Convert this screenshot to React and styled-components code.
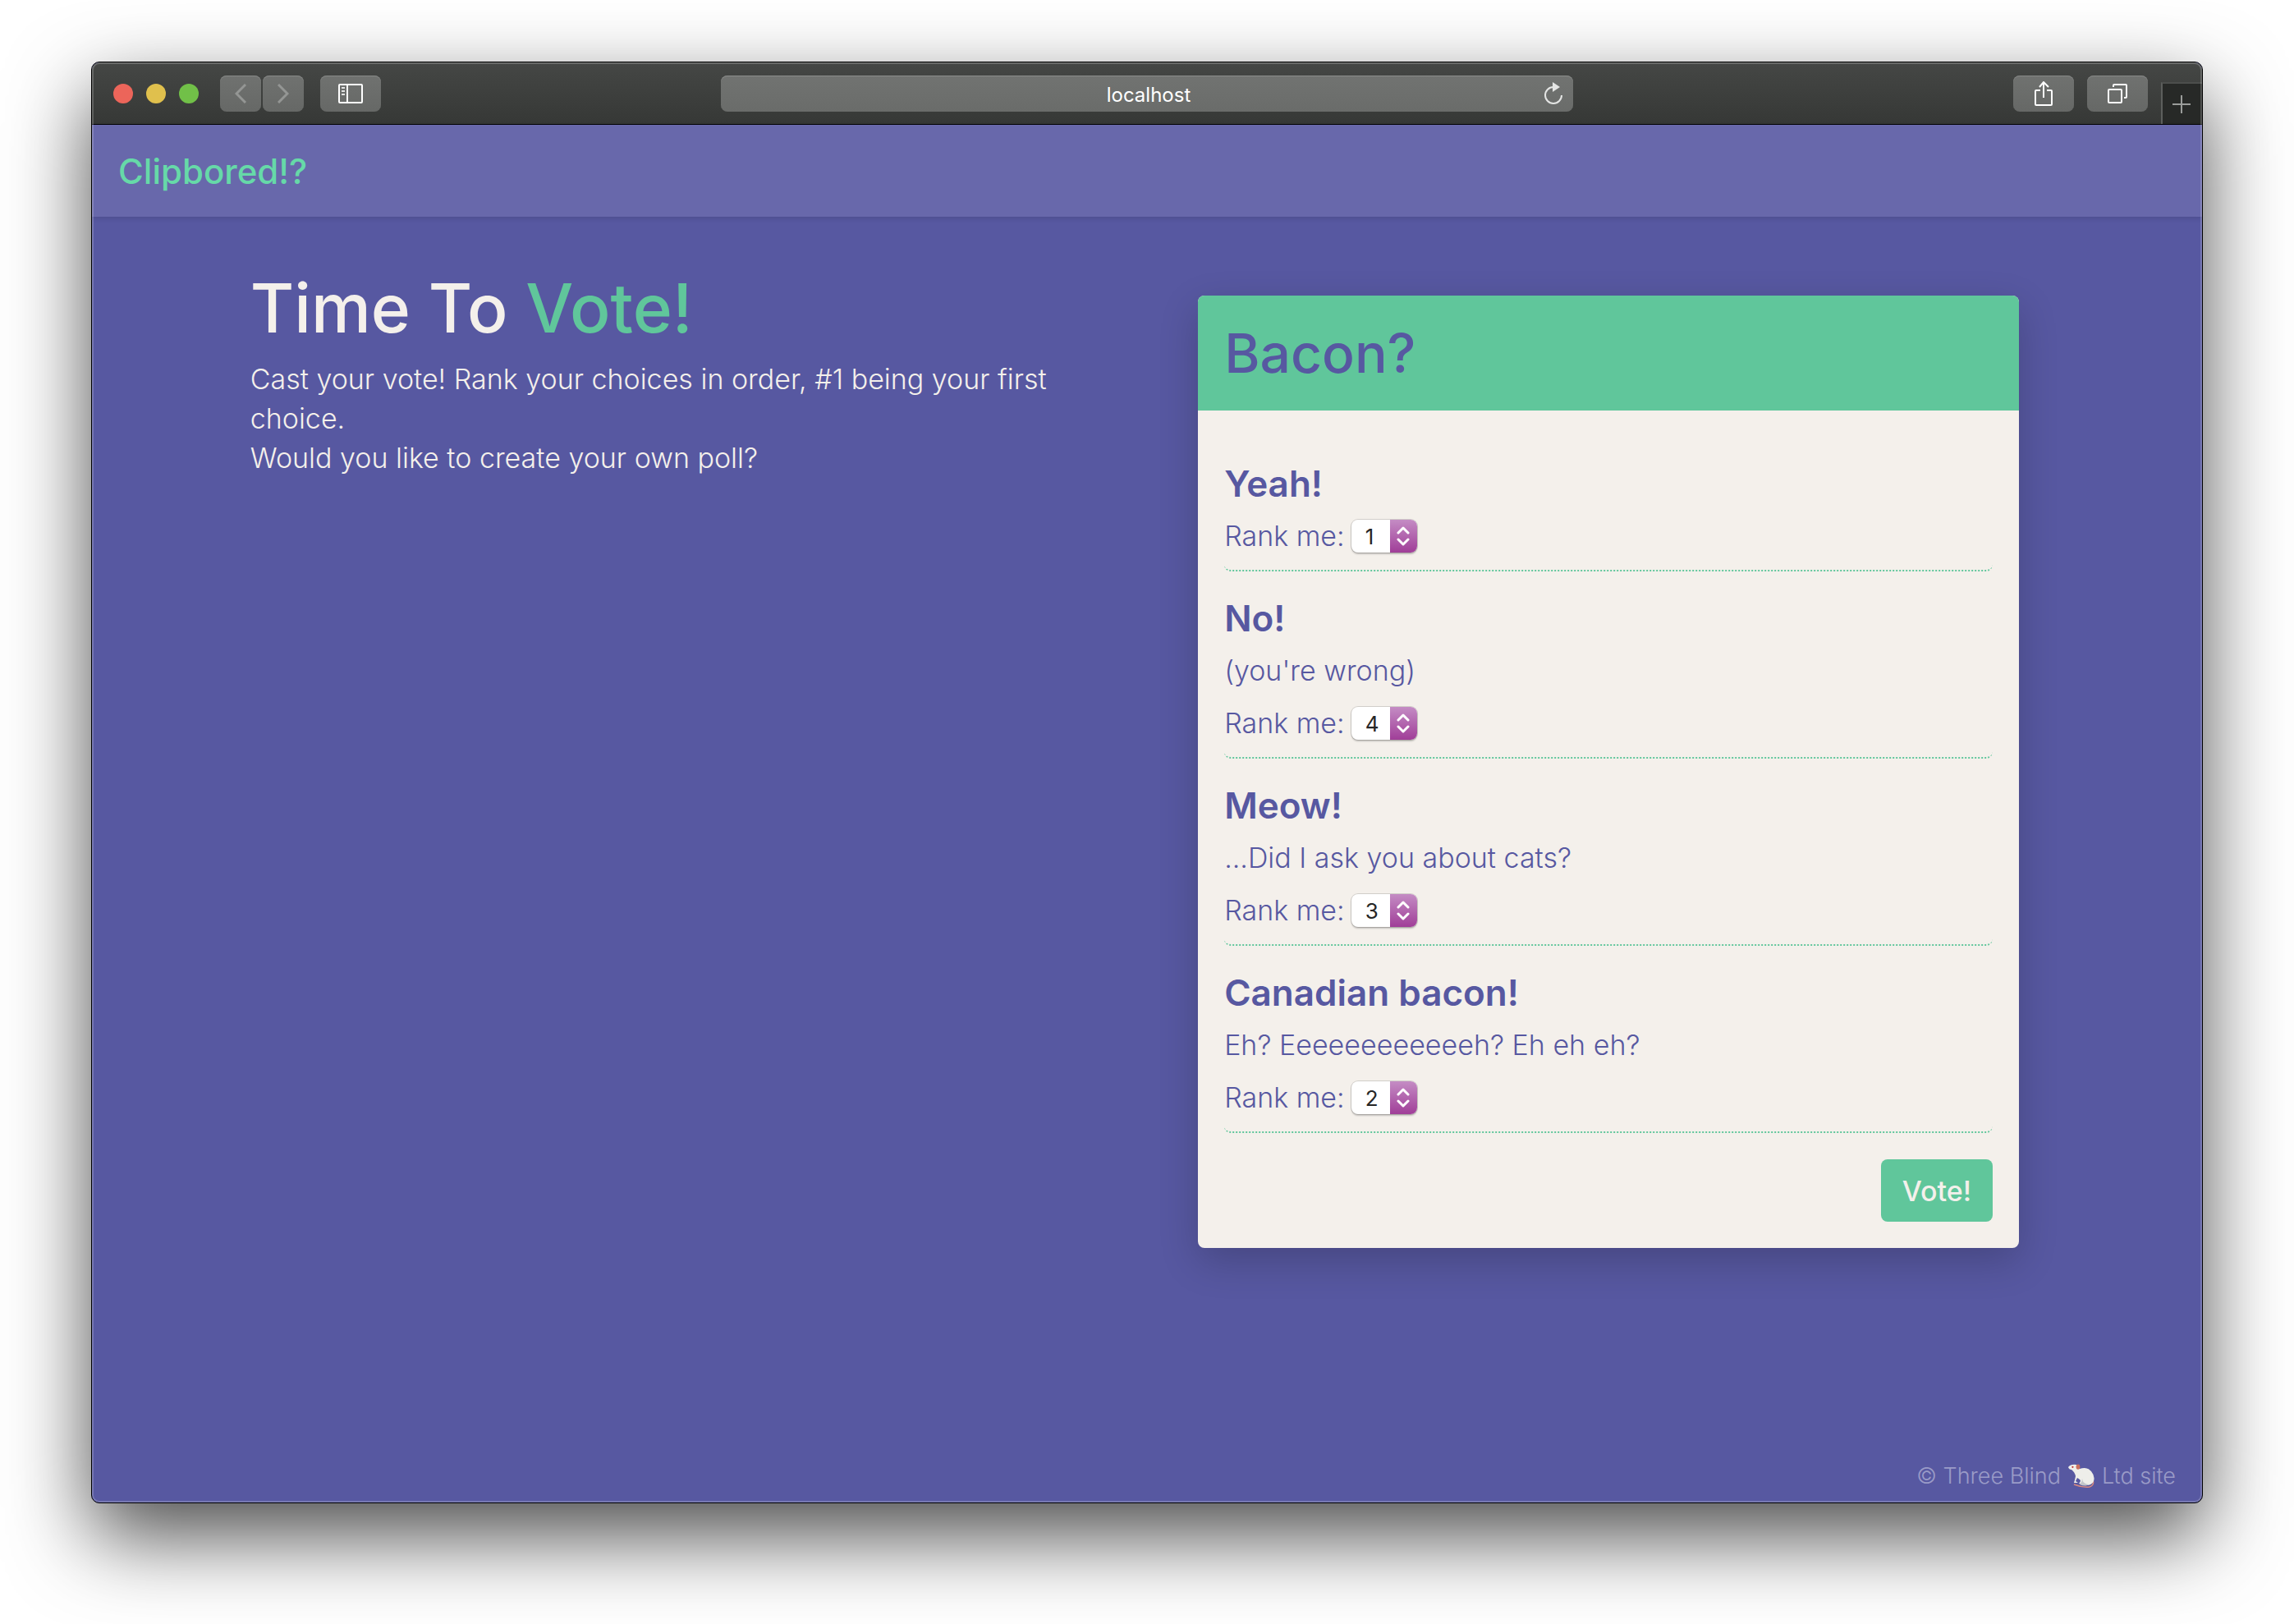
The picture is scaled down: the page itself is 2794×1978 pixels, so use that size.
import React, { useState } from "react";
import styled, { createGlobalStyle } from "styled-components";

const sans = `Inter, "Open Sans", "Liberation Sans", sans-serif`;

const colors = {
  page: "#5758a1",
  nav: "#6868ab",
  green: "#60c69b",
  mint: "#66d9a8",
  cream: "#f4f0eb",
};

const GlobalStyle = createGlobalStyle`
  *, *::before, *::after { box-sizing: border-box; }
  body { margin: 0; background: #fff; font-family: ${sans}; }
  h1, h2, h3, p { margin: 0; }
  button, select { font-family: inherit; }
`;

const Desktop = styled.div`
  display: flex;
  min-height: 100vh;
  padding: 75px 111px 147px;
  overflow: hidden;
`;

const Window = styled.div`
  position: relative;
  flex: 1;
  display: flex;
  flex-direction: column;
  border: 1px solid #000;
  border-radius: 10px;
  overflow: hidden;
  background: ${colors.page};
  box-shadow: 0 40px 100px rgba(0, 0, 0, 0.7);

  &::after {
    content: "";
    position: absolute;
    inset: 0;
    border: 2px solid rgba(255, 255, 255, 0.2);
    border-radius: 9px;
    pointer-events: none;
  }
`;

const TitleBar = styled.div`
  display: grid;
  grid-template-columns: 1fr minmax(0, 1038px) 1fr;
  height: 76px;
  padding-top: 16px;
  border-bottom: 1px solid #000;
  background: linear-gradient(#454745, #363836);
`;

const BarGroup = styled.div`
  display: flex;
  align-items: flex-start;
  justify-content: ${(p) => (p.$end ? "flex-end" : "flex-start")};
  padding-left: ${(p) => (p.$end ? 0 : 26)}px;
  gap: ${(p) => p.$gap}px;
`;

const Lights = styled.div`
  display: flex;
  align-items: center;
  gap: 16px;
  height: 44px;
  margin-right: 10px;
`;

const Light = styled.button`
  width: 24px;
  height: 24px;
  padding: 0;
  border: 0;
  border-radius: 50%;
  background: ${(p) => p.$color};
`;

const NavPair = styled.div`
  display: flex;
  gap: 2px;
  margin-right: 4px;
`;

const ToolButton = styled.button`
  display: flex;
  align-items: center;
  justify-content: center;
  width: ${(p) => (p.$narrow ? 50 : 74)}px;
  height: 44px;
  padding: 0;
  border: 0;
  border-radius: 8px;
  color: ${(p) => (p.$narrow ? "#949694" : "#fff")};
  background: linear-gradient(#707270, #666866);
  box-shadow: inset 0 1px 0 #868886;
`;

const AddressBar = styled.div`
  display: grid;
  grid-template-columns: 48px 1fr 48px;
  align-items: center;
  height: 44px;
  border-radius: 8px;
  background: linear-gradient(#717371, #6a6c6a);
  box-shadow: inset 0 1px 0 #8a8c8a;
`;

const AddressInput = styled.input`
  grid-column: 2;
  width: 100%;
  height: 44px;
  padding: 2px 0 0 4px;
  border: 0;
  outline: 0;
  background: none;
  color: #fff;
  font: 400 24px ${sans};
  text-align: center;
`;

const ReloadButton = styled.button`
  display: flex;
  justify-content: center;
  padding: 0;
  border: 0;
  background: none;
`;

const NewTab = styled.button`
  display: flex;
  align-items: center;
  justify-content: center;
  width: 50px;
  height: 51px;
  margin-top: 8px;
  padding: 0 2px 0 0;
  border: 0;
  border-top: 2px solid #4c4e4c;
  border-left: 2px solid #5c5e5c;
  background: #272927;
  color: #9a9c9a;
`;

const SiteHeader = styled.header`
  display: flex;
  align-items: center;
  height: 112px;
  padding: 0 32px;
  background: ${colors.nav};
  box-shadow: 0 2px 6px rgba(0, 0, 0, 0.12);
`;

const Brand = styled.a`
  color: ${colors.mint};
  font-size: 42px;
  font-weight: 500;
  text-decoration: none;
`;

const Main = styled.main`
  flex: 1;
  display: grid;
  grid-template-columns: 1fr 1fr;
  align-items: start;
  gap: 64px;
  width: 85%;
  margin: 0 auto;
  padding: 64px 0;
`;

const Intro = styled.section`
  color: ${colors.cream};
`;

const PageTitle = styled.h1`
  margin-bottom: 14px;
  font-size: 82px;
  font-weight: 500;
  line-height: 96px;

  em {
    color: ${colors.green};
    font-style: normal;
  }
`;

const IntroText = styled.p`
  font-size: 34px;
  font-weight: 300;
  line-height: 48px;
`;

const Card = styled.form`
  justify-self: center;
  width: 100%;
  max-width: 1000px;
  margin: 32px 0;
  border-radius: 8px;
  overflow: hidden;
  background: ${colors.cream};
  color: ${colors.page};
  box-shadow: 0 16px 48px rgba(0, 0, 0, 0.2);
`;

const CardTitle = styled.h2`
  padding: 0 32px;
  background: ${colors.green};
  font-size: 66px;
  font-weight: 500;
  line-height: 140px;
`;

const CardBody = styled.div`
  display: flex;
  flex-direction: column;
  padding: 32px;
`;

const Choice = styled.div`
  padding: 25px 0 9px;
  border-bottom: 2px dotted ${colors.green};
  border-radius: 8px;
  font-size: 34px;
  font-weight: 300;
  line-height: 64px;
`;

const ChoiceTitle = styled.h3`
  font-size: 44px;
  font-weight: 600;
`;

const RankRow = styled.div`
  display: flex;
  align-items: center;
  gap: 8px;
`;

const SelectBox = styled.div`
  position: relative;
  width: 80px;
  height: 40px;
  border-radius: 8px;
  overflow: hidden;
  background: #fff;
  box-shadow: 0 0 0 1px rgba(0, 0, 0, 0.14), 0 2px 2px rgba(0, 0, 0, 0.2);
`;

const Select = styled.select`
  display: block;
  width: 100%;
  height: 40px;
  padding: 0 0 0 17px;
  border: 0;
  outline: 0;
  appearance: none;
  background: none;
  color: #262626;
  font-size: 26px;
`;

const Stepper = styled.span`
  position: absolute;
  top: 0;
  right: 0;
  display: flex;
  align-items: center;
  justify-content: center;
  width: 33px;
  height: 40px;
  background: linear-gradient(#c48cc4, #a03e98);
  pointer-events: none;
`;

const VoteButton = styled.button`
  align-self: flex-end;
  height: 76px;
  margin-top: 32px;
  padding: 0 26px;
  border: 0;
  border-radius: 8px;
  background: ${colors.green};
  color: ${colors.cream};
  font-size: 34px;
  font-weight: 500;
`;

const Footer = styled.footer`
  display: flex;
  align-items: center;
  justify-content: flex-end;
  gap: 8px;
  padding: 0 32px 16px;
  color: #9a9bc7;
  font-size: 27px;
  font-weight: 300;
  line-height: 32px;
`;

const Icon = ({ w, h, sw = 2, children }) => (
  <svg width={w} height={h} viewBox={`0 0 ${w} ${h}`} fill="none" stroke="currentColor" strokeWidth={sw} aria-hidden="true">
    {children}
  </svg>
);

const Mouse = () => (
  <svg width="34" height="30" viewBox="0 0 34 30" role="img" aria-label="mouse">
    <path d="M8 25 Q18 29 27 28 Q33 26 31 20" fill="none" stroke="#d98a80" strokeWidth="1.6" />
    <path d="M1 4 Q4 0 11 1 Q15 2 15 6 Q24 3 29 9 Q34 15 32 21 Q30 26 23 26 L14 24 Q16 22 16 20 Q14 18 12 17 L10 21 L13 23 L8 23 Q9 20 10 15 Q9 10 5 7 Q2 7 1 4Z" fill="#eeeeea" />
    <path d="M18 18 Q19 25 27 25 Q21 28 15 25 Q18 22 18 18Z" fill="#c3c6ca" />
    <ellipse cx="13" cy="3.6" rx="2.4" ry="3.2" fill="#c9705f" />
    <circle cx="6.4" cy="3.8" r="1.1" fill="#c03030" />
  </svg>
);

const initialChoices = [
  { name: "Yeah!", rank: 1 },
  { name: "No!", note: "(you're wrong)", rank: 4 },
  { name: "Meow!", note: "...Did I ask you about cats?", rank: 3 },
  { name: "Canadian bacon!", note: "Eh? Eeeeeeeeeeeeh? Eh eh eh?", rank: 2 },
];

function ChoiceItem({ id, name, note, rank, count }) {
  const [value, setValue] = useState(rank);
  return (
    <Choice>
      <ChoiceTitle>{name}</ChoiceTitle>
      {note && <p>{note}</p>}
      <RankRow>
        <label htmlFor={id}>Rank me:</label>
        <SelectBox>
          <Select id={id} value={value} onChange={(e) => setValue(Number(e.target.value))}>
            {Array.from({ length: count }, (_, i) => (
              <option key={i} value={i + 1}>{i + 1}</option>
            ))}
          </Select>
          <Stepper>
            <Icon w={16} h={24} sw={3}>
              <path d="M2 8 L8 2 L14 8 M2 16 L8 22 L14 16" strokeLinecap="round" strokeLinejoin="round" stroke="#fff" />
            </Icon>
          </Stepper>
        </SelectBox>
      </RankRow>
    </Choice>
  );
}

export default function App() {
  return (
    <Desktop>
      <GlobalStyle />
      <Window>
        <TitleBar>
          <BarGroup $gap={16}>
            <Lights>
              <Light $color="#ec655a" aria-label="Close" />
              <Light $color="#e0c04d" aria-label="Minimise" />
              <Light $color="#71c048" aria-label="Zoom" />
            </Lights>
            <NavPair>
              <ToolButton $narrow aria-label="Back">
                <Icon w={14} h={24} sw={3}><path d="M13 1 L2 12 L13 23" /></Icon>
              </ToolButton>
              <ToolButton $narrow aria-label="Forward">
                <Icon w={14} h={24} sw={3}><path d="M1 1 L12 12 L1 23" /></Icon>
              </ToolButton>
            </NavPair>
            <ToolButton aria-label="Sidebar">
              <Icon w={30} h={24}>
                <rect x="1" y="1" width="28" height="22" rx="1" />
                <path d="M11 1 V23" />
                <path d="M4 5 H8 M4 9 H8 M4 13 H8" opacity="0.8" />
              </Icon>
            </ToolButton>
          </BarGroup>
          <AddressBar>
            <AddressInput aria-label="Address" defaultValue="localhost" />
            <ReloadButton aria-label="Reload">
              <svg width="24" height="28" viewBox="0 0 24 28" aria-hidden="true">
                <path d="M12 6 A10 10 0 1 0 22 16" fill="none" stroke="#e4e5e4" strokeWidth="2" />
                <path d="M11 0 L20 6 L11 12Z" fill="#e4e5e4" />
              </svg>
            </ReloadButton>
          </AddressBar>
          <BarGroup $end $gap={16}>
            <ToolButton aria-label="Share">
              <Icon w={24} h={30}>
                <path d="M8 11 H3 Q2 11 2 12 V28 Q2 29 3 29 H21 Q22 29 22 28 V12 Q22 11 21 11 H16" />
                <path d="M12 20 V2 M7 7 L12 1 L18 7" />
              </Icon>
            </ToolButton>
            <ToolButton aria-label="Show tabs">
              <Icon w={24} h={24}>
                <rect x="1" y="7" width="16" height="16" rx="1" />
                <path d="M7 4 V2 Q7 1 8 1 H22 Q23 1 23 2 V16 Q23 17 22 17 H20" />
              </Icon>
            </ToolButton>
            <NewTab aria-label="New tab">
              <Icon w={22} h={22}><path d="M11 0 V22 M0 11 H22" /></Icon>
            </NewTab>
          </BarGroup>
        </TitleBar>
        <SiteHeader>
          <Brand href="#">Clipbored!?</Brand>
        </SiteHeader>
        <Main>
          <Intro>
            <PageTitle>Time To <em>Vote!</em></PageTitle>
            <IntroText>Cast your vote! Rank your choices in order, #1 being your first choice.</IntroText>
            <IntroText>Would you like to create your own poll?</IntroText>
          </Intro>
          <Card onSubmit={(e) => e.preventDefault()}>
            <CardTitle>Bacon?</CardTitle>
            <CardBody>
              {initialChoices.map((c, i) => (
                <ChoiceItem key={c.name} id={`rank-${i}`} count={initialChoices.length} {...c} />
              ))}
              <VoteButton type="submit">Vote!</VoteButton>
            </CardBody>
          </Card>
        </Main>
        <Footer>
          <span>© Three Blind</span>
          <Mouse />
          <span>Ltd site</span>
        </Footer>
      </Window>
    </Desktop>
  );
}
